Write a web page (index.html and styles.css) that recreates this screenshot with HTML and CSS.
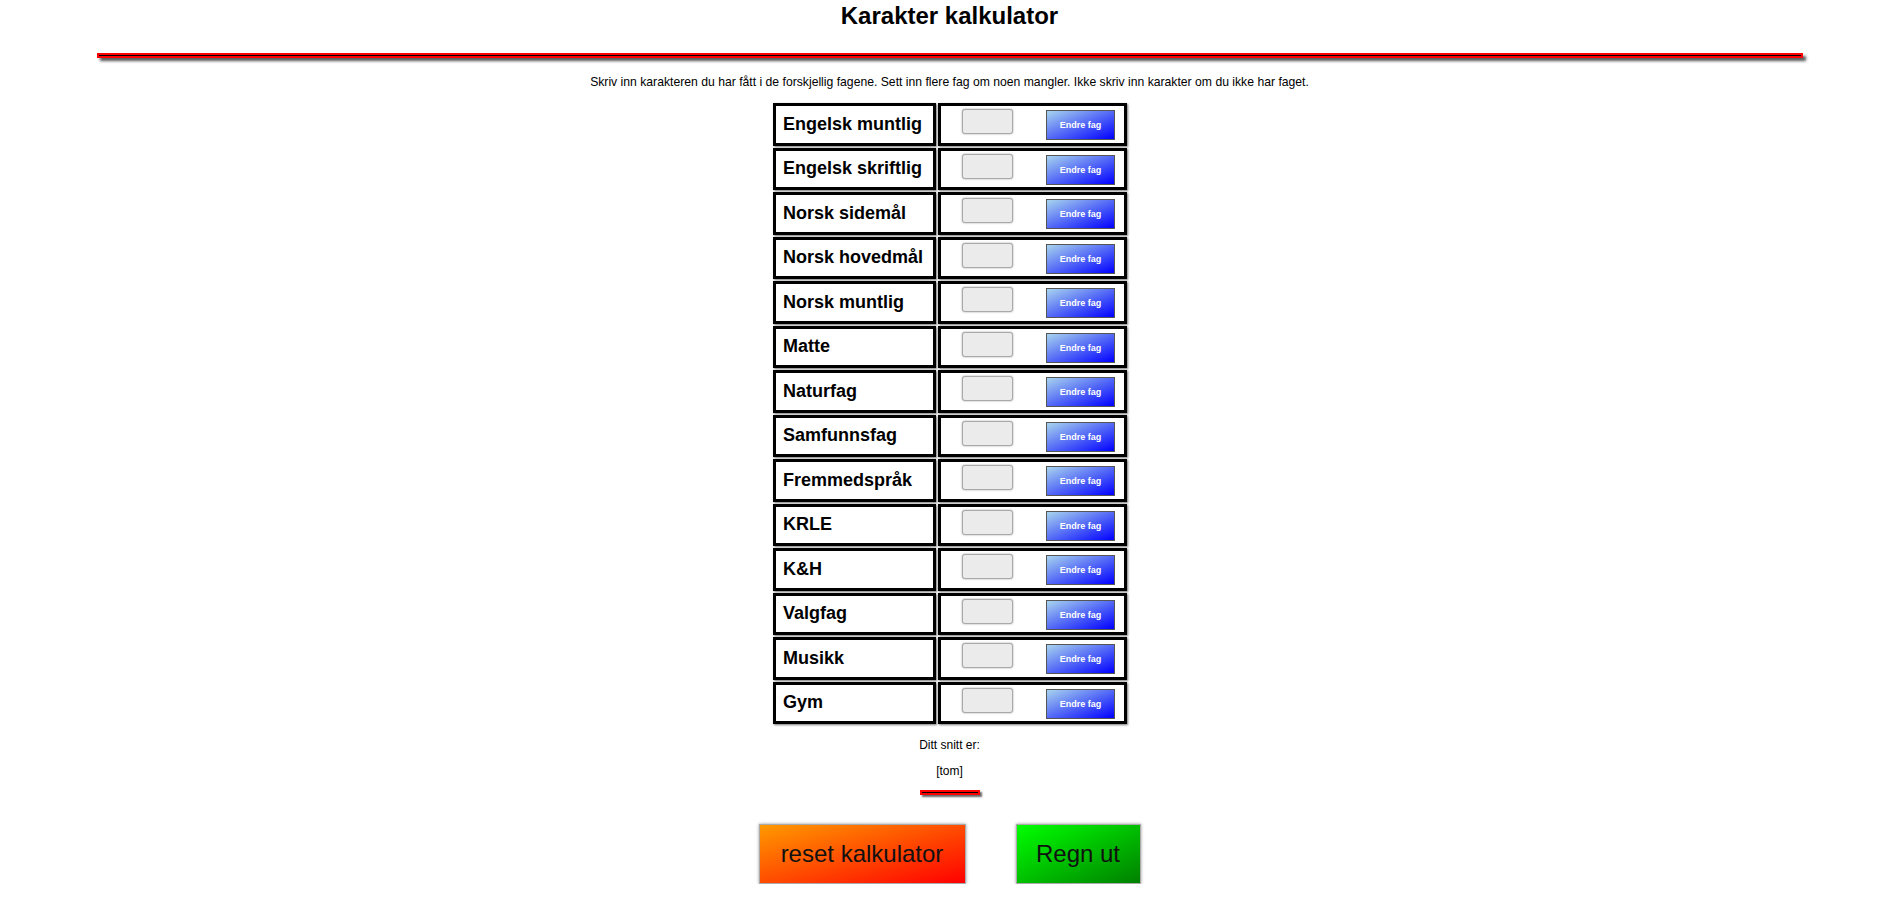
FILE: index.html
```html
<!DOCTYPE html>
<html lang="no">
<head>
<meta charset="utf-8">
<title>Karakter kalkulator</title>
<link rel="stylesheet" href="styles.css">
</head>
<body>
<h1 class="title">Karakter kalkulator</h1>
<hr class="rule">
<p class="intro">Skriv inn karakteren du har fått i de forskjellig fagene. Sett inn flere fag om noen mangler. Ikke skriv inn karakter om du ikke har faget.</p>
<table class="grades">
  <tbody>
    <tr class="row"><td class="subject">Engelsk muntlig</td><td class="grade"><div class="grade-inner"><input class="grade-input" type="text"><button class="change-btn" type="button">Endre fag</button></div></td></tr>
    <tr class="row"><td class="subject">Engelsk skriftlig</td><td class="grade"><div class="grade-inner"><input class="grade-input" type="text"><button class="change-btn" type="button">Endre fag</button></div></td></tr>
    <tr class="row"><td class="subject">Norsk sidemål</td><td class="grade"><div class="grade-inner"><input class="grade-input" type="text"><button class="change-btn" type="button">Endre fag</button></div></td></tr>
    <tr class="row"><td class="subject">Norsk hovedmål</td><td class="grade"><div class="grade-inner"><input class="grade-input" type="text"><button class="change-btn" type="button">Endre fag</button></div></td></tr>
    <tr class="row"><td class="subject">Norsk muntlig</td><td class="grade"><div class="grade-inner"><input class="grade-input" type="text"><button class="change-btn" type="button">Endre fag</button></div></td></tr>
    <tr class="row"><td class="subject">Matte</td><td class="grade"><div class="grade-inner"><input class="grade-input" type="text"><button class="change-btn" type="button">Endre fag</button></div></td></tr>
    <tr class="row"><td class="subject">Naturfag</td><td class="grade"><div class="grade-inner"><input class="grade-input" type="text"><button class="change-btn" type="button">Endre fag</button></div></td></tr>
    <tr class="row"><td class="subject">Samfunnsfag</td><td class="grade"><div class="grade-inner"><input class="grade-input" type="text"><button class="change-btn" type="button">Endre fag</button></div></td></tr>
    <tr class="row"><td class="subject">Fremmedspråk</td><td class="grade"><div class="grade-inner"><input class="grade-input" type="text"><button class="change-btn" type="button">Endre fag</button></div></td></tr>
    <tr class="row"><td class="subject">KRLE</td><td class="grade"><div class="grade-inner"><input class="grade-input" type="text"><button class="change-btn" type="button">Endre fag</button></div></td></tr>
    <tr class="row"><td class="subject">K&amp;H</td><td class="grade"><div class="grade-inner"><input class="grade-input" type="text"><button class="change-btn" type="button">Endre fag</button></div></td></tr>
    <tr class="row"><td class="subject">Valgfag</td><td class="grade"><div class="grade-inner"><input class="grade-input" type="text"><button class="change-btn" type="button">Endre fag</button></div></td></tr>
    <tr class="row"><td class="subject">Musikk</td><td class="grade"><div class="grade-inner"><input class="grade-input" type="text"><button class="change-btn" type="button">Endre fag</button></div></td></tr>
    <tr class="row"><td class="subject">Gym</td><td class="grade"><div class="grade-inner"><input class="grade-input" type="text"><button class="change-btn" type="button">Endre fag</button></div></td></tr>
  </tbody>
</table>
<p class="result-label">Ditt snitt er:</p>
<p class="result-value">[tom]</p>
<hr class="rule-small">
<div class="actions">
  <button class="btn btn-reset" type="button">reset kalkulator</button>
  <button class="btn btn-calc" type="button">Regn ut</button>
</div>
</body>
</html>
```
FILE: styles.css
```css
html, body {
  margin: 0;
  padding: 0;
  background: #fff;
}

body {
  font-family: "Liberation Sans", Arial, sans-serif;
  color: #000;
  text-align: center;
  padding-right: 1px;
}

.title {
  font-size: 24px;
  font-weight: bold;
  line-height: normal;
  margin: 2px 0 23.4px;
}

.rule {
  width: 1702px;
  height: 1px;
  margin: 0 auto;
  padding: 0;
  border: 2px solid #ff0000;
  background: #000;
  box-shadow: 3px 3px 3px #555;
}

.intro {
  font-size: 12.2px;
  line-height: 13.8px;
  margin: 18px 0 11px;
}

.grades {
  margin: 0 auto;
  border-collapse: separate;
  border-spacing: 2px;
}

.row {
  height: 42.5px;
}

.subject,
.grade {
  box-sizing: border-box;
  border: 3px solid #000;
  box-shadow: 1px 1px 2px #777;
  vertical-align: middle;
  padding: 0;
}

.subject {
  width: 163px;
  padding-left: 7.5px;
  text-align: left;
  font-size: 18px;
  font-weight: bold;
  white-space: nowrap;
}

.grade {
  width: 189px;
  vertical-align: top;
}

.grade-inner {
  display: flex;
  align-items: flex-start;
  justify-content: space-between;
  padding: 3px 8.5px 0 21.5px;
}

.grade-input {
  box-sizing: border-box;
  width: 51px;
  height: 25px;
  margin: 0;
  padding: 0 4px;
  background: #ebebeb;
  border: 1px solid #a9a9a9;
  border-radius: 3px;
  box-shadow: 0 0 2px #999;
  font-family: "Liberation Sans", Arial, sans-serif;
}

.change-btn {
  box-sizing: border-box;
  width: 69px;
  height: 30px;
  margin: 1px 0 0;
  padding: 0;
  border: 1px solid #555;
  background: linear-gradient(to bottom right, #a8d4ee, #0000ff);
  color: #fff;
  font-family: "Liberation Sans", Arial, sans-serif;
  font-size: 9px;
  font-weight: bold;
  white-space: nowrap;
}

.result-label,
.result-value {
  font-size: 12px;
  line-height: normal;
  margin: 12px 0;
}

.rule-small {
  width: 56px;
  height: 1px;
  margin: 12px auto 0;
  padding: 0;
  border: 2px solid #ff0000;
  background: #000;
  box-shadow: 2px 2px 2px #666;
}

.actions {
  display: flex;
  justify-content: center;
  gap: 50px;
  margin-top: 29px;
}

.btn {
  box-sizing: border-box;
  height: 60px;
  padding: 0;
  border: 1px solid #aaa;
  box-shadow: 0 0 3px #999;
  color: #111;
  font-family: "Liberation Sans", Arial, sans-serif;
  font-size: 24px;
  white-space: nowrap;
}

.btn-reset {
  width: 207px;
  background: linear-gradient(to bottom right, #ff9900, #ff0000);
}

.btn-calc {
  width: 125px;
  background: linear-gradient(to bottom right, #00ff00, #008000);
}
```
